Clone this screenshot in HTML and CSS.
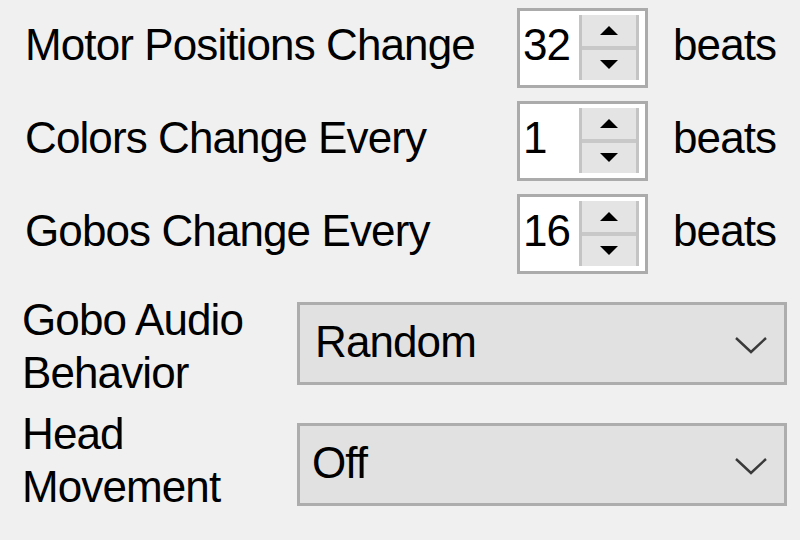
FILE: index.html
```html
<!DOCTYPE html>
<html>
<head>
<meta charset="utf-8">
<link rel="stylesheet" href="styles.css">
</head>
<body>
<div class="panel">
  <div class="row">
    <div class="label">Motor Positions Change</div>
    <div class="spin">
      <div class="value">32</div>
      <div class="btns">
        <div class="btn up"><svg width="20" height="9" viewBox="0 0 20 9"><polygon points="10,0 19,9 1,9" fill="#000"/></svg></div>
        <div class="btn down"><svg width="20" height="9" viewBox="0 0 20 9"><polygon points="1,0 19,0 10,9" fill="#000"/></svg></div>
      </div>
    </div>
    <div class="unit">beats</div>
  </div>
  <div class="row">
    <div class="label">Colors Change Every</div>
    <div class="spin">
      <div class="value">1</div>
      <div class="btns">
        <div class="btn up"><svg width="20" height="9" viewBox="0 0 20 9"><polygon points="10,0 19,9 1,9" fill="#000"/></svg></div>
        <div class="btn down"><svg width="20" height="9" viewBox="0 0 20 9"><polygon points="1,0 19,0 10,9" fill="#000"/></svg></div>
      </div>
    </div>
    <div class="unit">beats</div>
  </div>
  <div class="row">
    <div class="label">Gobos Change Every</div>
    <div class="spin">
      <div class="value">16</div>
      <div class="btns">
        <div class="btn up"><svg width="20" height="9" viewBox="0 0 20 9"><polygon points="10,0 19,9 1,9" fill="#000"/></svg></div>
        <div class="btn down"><svg width="20" height="9" viewBox="0 0 20 9"><polygon points="1,0 19,0 10,9" fill="#000"/></svg></div>
      </div>
    </div>
    <div class="unit">beats</div>
  </div>
  <div class="crow first">
    <div class="clabel">Gobo Audio<br>Behavior</div>
    <div class="combo">
      <span class="ctext">Random</span>
      <svg class="chev" width="34" height="18" viewBox="0 0 34 18"><polyline points="2,2 17,16 32,2" fill="none" stroke="#3a3a3a" stroke-width="2.4"/></svg>
    </div>
  </div>
  <div class="crow second">
    <div class="clabel">Head<br>Movement</div>
    <div class="combo">
      <span class="ctext">Off</span>
      <svg class="chev" width="34" height="18" viewBox="0 0 34 18"><polyline points="2,2 17,16 32,2" fill="none" stroke="#3a3a3a" stroke-width="2.4"/></svg>
    </div>
  </div>
</div>
</body>
</html>
```

FILE: styles.css
```css
html, body {
  margin: 0;
  padding: 0;
  background: #f0f0f0;
  width: 800px;
  height: 540px;
  overflow: hidden;
}
body {
  font-family: "Liberation Sans", Arial, sans-serif;
  font-size: 44px;
  letter-spacing: -0.9px;
  color: #000;
}
.panel {
  padding-top: 8px;
  display: flex;
  flex-direction: column;
}
.row {
  display: flex;
  align-items: center;
  height: 80px;
  margin-bottom: 13px;
}
.label {
  width: 517px;
  box-sizing: border-box;
  padding-left: 25px;
  white-space: nowrap;
  padding-bottom: 6px;
}
.spin {
  width: 131px;
  height: 80px;
  box-sizing: border-box;
  border: 3px solid #ababab;
  background: #fff;
  display: flex;
  align-items: stretch;
}
.value {
  flex: 1;
  padding-left: 3px;
  display: flex;
  align-items: center;
  padding-bottom: 6px;
}
.btns {
  width: 54px;
  margin: 4px 6px 5px 0;
  display: flex;
  flex-direction: column;
  border-left: 3px solid #c4c4c4;
  border-right: 3px solid #c4c4c4;
  background: #e4e4e4;
}
.btn {
  flex: 1;
  display: flex;
  align-items: center;
  justify-content: center;
}
.btn.up {
  border-bottom: 4px solid #c8c8c8;
}
.unit {
  margin-left: 25px;
  padding-bottom: 6px;
}
.crow {
  display: flex;
  align-items: center;
  height: 83px;
}
.crow.first {
  margin-top: 15px;
}
.crow.second {
  margin-top: 38px;
}
.clabel {
  width: 297px;
  flex-shrink: 0;
  box-sizing: border-box;
  padding-left: 22px;
  line-height: 53px;
}
.crow.first .clabel {
  padding-top: 4px;
}
.crow.second .clabel {
  padding-bottom: 10px;
}
.combo {
  width: 490px;
  height: 83px;
  flex-shrink: 0;
  box-sizing: border-box;
  border: 3px solid #adadad;
  background: #e1e1e1;
  display: flex;
  align-items: center;
  justify-content: space-between;
  padding: 0 16px 0 15px;
}
.crow.second .combo {
  padding-left: 12px;
}
.ctext {
  padding-bottom: 3px;
}
.chev {
  display: block;
  margin-top: 2px;
}
```
